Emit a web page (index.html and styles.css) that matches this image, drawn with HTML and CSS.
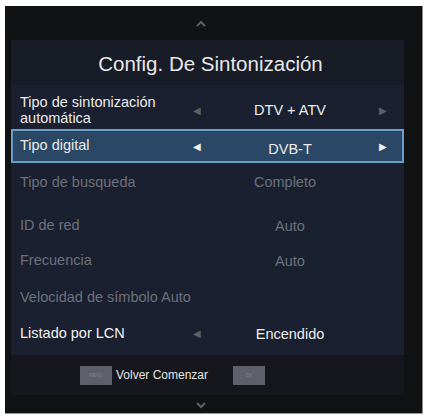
FILE: index.html
```html
<!DOCTYPE html>
<html>
<head>
<meta charset="utf-8">
<link rel="stylesheet" href="styles.css">
</head>
<body>
<div class="tv">
  <div class="arrow-top"><svg width="10" height="7" viewBox="0 0 10 7"><path d="M1 6 L5 2 L9 6" fill="none" stroke="#5a5e66" stroke-width="2"/></svg></div>
  <div class="panel">
    <div class="title">Config. De Sintonización</div>
    <div class="rows">
      <div class="row r1">
        <div class="label">Tipo de sintonización<br>automática</div>
        <div class="larr dim">&#9664;</div>
        <div class="value">DTV + ATV</div>
        <div class="rarr dim">&#9654;</div>
      </div>
      <div class="row r2 sel">
        <div class="label">Tipo digital</div>
        <div class="larr">&#9664;</div>
        <div class="value v-low">DVB-T</div>
        <div class="rarr">&#9654;</div>
      </div>
      <div class="row r3 off">
        <div class="label">Tipo de busqueda</div>
        <div class="larr"></div>
        <div class="value vl">Completo</div>
        <div class="rarr"></div>
      </div>
      <div class="row r4 off">
        <div class="label">ID de red</div>
        <div class="larr"></div>
        <div class="value">Auto</div>
        <div class="rarr"></div>
      </div>
      <div class="row r5 off">
        <div class="label">Frecuencia</div>
        <div class="larr"></div>
        <div class="value">Auto</div>
        <div class="rarr"></div>
      </div>
      <div class="row r6 off">
        <div class="label wide">Velocidad de símbolo Auto</div>
      </div>
      <div class="row r7">
        <div class="label">Listado por LCN</div>
        <div class="larr dim">&#9664;</div>
        <div class="value">Encendido</div>
        <div class="rarr"></div>
      </div>
    </div>
    <div class="footer">
      <span class="key">MENU</span>
      <span class="ftext">Volver Comenzar</span>
      <span class="key ok">OK</span>
    </div>
  </div>
  <div class="arrow-bot"><svg width="10" height="7" viewBox="0 0 10 7"><path d="M1 1 L5 5 L9 1" fill="none" stroke="#5a5e66" stroke-width="2"/></svg></div>
</div>
</body>
</html>
```
FILE: styles.css
```css
html, body { margin: 0; padding: 0; background: #fff; }
body { font-family: "Liberation Sans", Arial, sans-serif; }
.tv {
  margin: 6px 0 0 5px;
  width: 417px;
  height: 407px;
  background: #111214;
  border-right: 1px solid #8a8a8a;
  border-bottom: 1px solid #9a9a9a;
  display: flex;
  flex-direction: column;
}
.arrow-top { height: 34px; display: flex; justify-content: center; align-items: center; padding-right: 26px; box-sizing: border-box; }
.arrow-bot { flex: 1; display: flex; justify-content: center; align-items: center; padding-right: 26px; padding-top: 3px; }
.panel {
  margin-left: 6px;
  width: 393px;
  background: #1b2030;
  display: flex;
  flex-direction: column;
}
.title {
  height: 45px;
  background: #181c27;
  color: #e8e8e8;
  font-size: 20.5px;
  display: flex;
  align-items: center;
  justify-content: center;
  padding-top: 2px;
  padding-left: 6px;
  box-sizing: border-box;
}
.rows { display: flex; flex-direction: column; padding-bottom: 4px; }
.row {
  display: grid;
  grid-template-columns: 172px 24px 162px 24px;
  align-items: center;
  color: #ececec;
  font-size: 14.5px;
  box-sizing: border-box;
  border: 2px solid transparent;
}
.label { padding-left: 7px; line-height: 16.5px; }
.larr, .rarr { font-size: 10px; text-align: center; color: #f0f0f0; }
.dim { color: #5b606b; }
.value { text-align: center; }
.r1 { height: 44px; padding-top: 6px; }
.r1 .value { padding-top: 0; }
.r2 { height: 34px; }
.sel { background: #2a4766; border-color: #6b9fca; }
.v-low { padding-top: 6px; }
.sel .label { margin-top: -1px; }
.off { color: #6c717c; }
.r3 { height: 38px; }
.r4 { height: 42px; padding-top: 7px; }
.r5 { height: 34px; padding-top: 1px; }
.r6 { height: 38px; padding-top: 3px; }
.r7 { height: 36px; padding-top: 1px; }
.r7 .label { color: #f2f2f2; }
.wide { grid-column: 1 / span 4; }
.vl { padding-right: 10px; }
.footer {
  height: 40px;
  background: #15171d;
  display: flex;
  align-items: center;
  padding-left: 69px;
  font-size: 12px;
  color: #e6e6e6;
}
.key {
  display: inline-block;
  width: 32px;
  height: 19px;
  background: #5d6068;
  color: #7d8088;
  font-size: 5px;
  line-height: 19px;
  text-align: center;
}
.ftext { margin-left: 4px; }
.ok { margin-left: 25px; }
```
